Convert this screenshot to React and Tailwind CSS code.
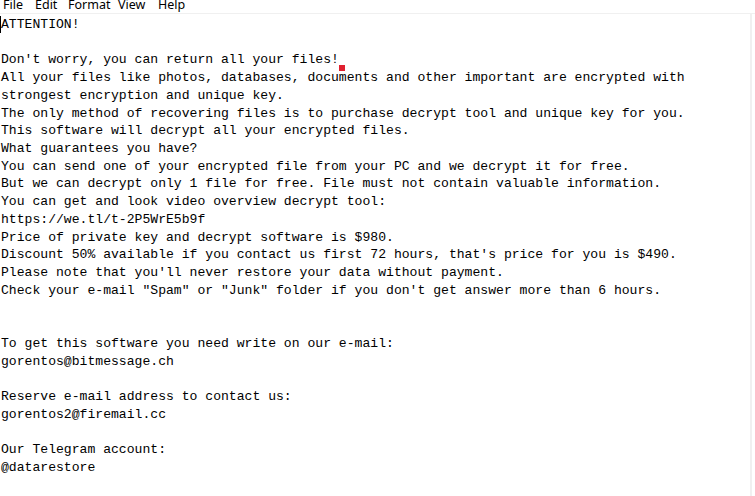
import React from 'react';

const lines = [
  'ATTENTION!',
  '',
  "Don't worry, you can return all your files!",
  'All your files like photos, databases, documents and other important are encrypted with',
  'strongest encryption and unique key.',
  'The only method of recovering files is to purchase decrypt tool and unique key for you.',
  'This software will decrypt all your encrypted files.',
  'What guarantees you have?',
  'You can send one of your encrypted file from your PC and we decrypt it for free.',
  'But we can decrypt only 1 file for free. File must not contain valuable information.',
  'You can get and look video overview decrypt tool:',
  'https://we.tl/t-2P5WrE5b9f',
  'Price of private key and decrypt software is $980.',
  "Discount 50% available if you contact us first 72 hours, that's price for you is $490.",
  "Please note that you'll never restore your data without payment.",
  'Check your e-mail "Spam" or "Junk" folder if you don\'t get answer more than 6 hours.',
  '',
  '',
  'To get this software you need write on our e-mail:',
  'gorentos@bitmessage.ch',
  '',
  'Reserve e-mail address to contact us:',
  'gorentos2@firemail.cc',
  '',
  'Our Telegram account:',
  '@datarestore',
];

const menu = [
  { label: 'File', cls: 'w-[35px] pl-[3px]' },
  { label: 'Edit', cls: 'w-[33px]' },
  { label: 'Format', cls: 'w-[50px]' },
  { label: 'View', cls: 'w-[40px]' },
  { label: 'Help', cls: 'w-[40px]' },
];

const App = () => {
  return (
    <div className="w-[755px] h-[496px] bg-white overflow-hidden flex flex-col">
      {/* Menu bar (top is cut off in the capture) */}
      <div className="h-[13px] overflow-hidden flex items-start shrink-0 font-['Noto_Sans',_'Liberation_Sans',_sans-serif] text-[12.5px] text-black">
        {menu.map(item => (
          <span key={item.label} className={`${item.cls} leading-[12px] -mt-[1px] shrink-0`}>
            {item.label}
          </span>
        ))}
      </div>

      {/* Editor area */}
      <div className="flex flex-1 border-t border-[#f0f0f0]">
        <div className="relative w-[752px] border-r-2 border-[#f0f0f0] pl-[1px] pt-[2px] font-['Liberation_Mono',_'DejaVu_Sans_Mono',_monospace] text-[13.1px] leading-[17.73px] text-black">
          {lines.map((line, i) => (
            <div key={i} className="whitespace-pre h-[17.73px]">
              {line}
            </div>
          ))}
          {/* caret */}
          <span className="absolute left-0 top-[2px] w-[1px] h-[17px] bg-black" />
          {/* red mark */}
          <span className="absolute left-[339px] top-[51px] w-[6px] h-[6px] bg-[#e0202f]" />
        </div>
        <div className="flex-1 bg-white" />
      </div>
    </div>
  );
};

export default App;
